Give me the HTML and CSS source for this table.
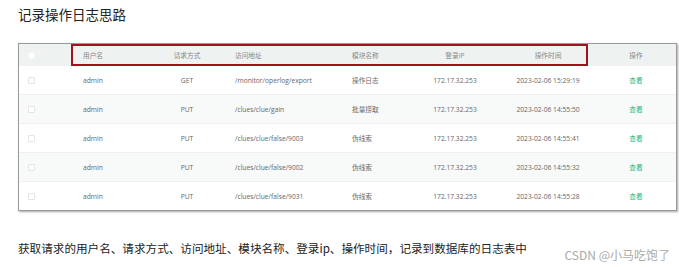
FILE: index.html
```html
<!DOCTYPE html>
<html lang="zh-CN">

<head>
    <meta charset="UTF-8">
    <meta name="viewport" content="width=device-width, initial-scale=1.0">
    <title>记录操作日志思路</title>
    <link rel="stylesheet" href="styles.css">
</head>

<body>
    <div class="page">
        <h1 class="title">记录操作日志思路</h1>

        <div class="shot">
            <div class="row head">
                <div class="cell check"><span class="box"></span></div>
                <div class="cell left">用户名</div>
                <div class="cell center">请求方式</div>
                <div class="cell url">访问地址</div>
                <div class="cell left">模块名称</div>
                <div class="cell center">登录IP</div>
                <div class="cell center">操作时间</div>
                <div class="cell center">操作</div>
            </div>

            <div class="row">
                <div class="cell check"><span class="box"></span></div>
                <div class="cell left">admin</div>
                <div class="cell center">GET</div>
                <div class="cell url">/monitor/operlog/export</div>
                <div class="cell left">操作日志</div>
                <div class="cell center">172.17.32.253</div>
                <div class="cell center">2023-02-06 15:29:19</div>
                <div class="cell center"><span class="link">查看</span></div>
            </div>
            <div class="row stripe">
                <div class="cell check"><span class="box"></span></div>
                <div class="cell left">admin</div>
                <div class="cell center">PUT</div>
                <div class="cell url">/clues/clue/gain</div>
                <div class="cell left">批量捞取</div>
                <div class="cell center">172.17.32.253</div>
                <div class="cell center">2023-02-06 14:55:50</div>
                <div class="cell center"><span class="link">查看</span></div>
            </div>
            <div class="row">
                <div class="cell check"><span class="box"></span></div>
                <div class="cell left">admin</div>
                <div class="cell center">PUT</div>
                <div class="cell url">/clues/clue/false/9003</div>
                <div class="cell left">伪线索</div>
                <div class="cell center">172.17.32.253</div>
                <div class="cell center">2023-02-06 14:55:41</div>
                <div class="cell center"><span class="link">查看</span></div>
            </div>
            <div class="row stripe">
                <div class="cell check"><span class="box"></span></div>
                <div class="cell left">admin</div>
                <div class="cell center">PUT</div>
                <div class="cell url">/clues/clue/false/9002</div>
                <div class="cell left">伪线索</div>
                <div class="cell center">172.17.32.253</div>
                <div class="cell center">2023-02-06 14:55:32</div>
                <div class="cell center"><span class="link">查看</span></div>
            </div>
            <div class="row last">
                <div class="cell check"><span class="box"></span></div>
                <div class="cell left">admin</div>
                <div class="cell center">PUT</div>
                <div class="cell url">/clues/clue/false/9031</div>
                <div class="cell left">伪线索</div>
                <div class="cell center">172.17.32.253</div>
                <div class="cell center">2023-02-06 14:55:28</div>
                <div class="cell center"><span class="link">查看</span></div>
            </div>

            <!-- highlight drawn over the header -->
            <div class="mark"></div>
        </div>

        <p class="desc">获取请求的用户名、请求方式、访问地址、模块名称、登录ip、操作时间，记录到数据库的日志表中</p>

        <div class="watermark">CSDN @小马吃饱了</div>
    </div>
</body>

</html>
```

FILE: styles.css
```css
body {
    margin: 0;
    background-color: white;
    font-family: "Noto Sans CJK SC", sans-serif;
}

.page {
    position: relative;
    width: 679px;
    height: 267px;
    padding: 6px 0 0 18px;
    box-sizing: border-box;
}

.title {
    margin: 0 0 21px;
    font-size: 13.5px;
    line-height: 16px;
    font-weight: normal;
    color: #222;
}

.shot {
    position: relative;
    width: 659px;
    border: 1px solid #9a9a9a;
    box-sizing: border-box;
    box-shadow: 1px 1px 2px rgba(0, 0, 0, 0.35);
    font-family: "Open Sans", "Noto Sans CJK SC", sans-serif;
    font-size: 6.7px;
    color: #666;
}

.row {
    display: grid;
    grid-template-columns: 52px 69px 94px 106px 70px 90px 96px 80px;
    height: 29px;
    align-items: center;
    border-bottom: 1px solid #f0f0f0;
    box-sizing: border-box;
}

.row.head {
    height: 22px;
    background-color: #eef2f1;
    color: #888;
    border-bottom: none;
}

.row.stripe {
    background-color: #f8f9f9;
}

.row.last {
    height: 28px;
    border-bottom: none;
}

.cell {
    white-space: nowrap;
}

.check {
    padding-left: 9px;
    display: flex;
    align-items: center;
}

.box {
    width: 7px;
    height: 7px;
    border: 1px solid #e4e4e4;
    border-radius: 1px;
    background-color: white;
    box-sizing: border-box;
}

.head .box {
    border-color: #f4f6f5;
}

.left {
    padding-left: 12px;
}

.center {
    text-align: center;
}

.url {
    padding-left: 1px;
}

.link {
    color: #2bb67c;
}

.mark {
    position: absolute;
    left: 52px;
    top: 0;
    width: 517px;
    height: 22px;
    border: 2px solid #a3121c;
    box-sizing: border-box;
}

.desc {
    margin: 29px 0 0;
    font-size: 11.6px;
    line-height: 16px;
    color: #222;
}

.watermark {
    position: absolute;
    right: 9px;
    bottom: 5px;
    font-size: 12px;
    line-height: 14px;
    color: #aaa;
}
```
